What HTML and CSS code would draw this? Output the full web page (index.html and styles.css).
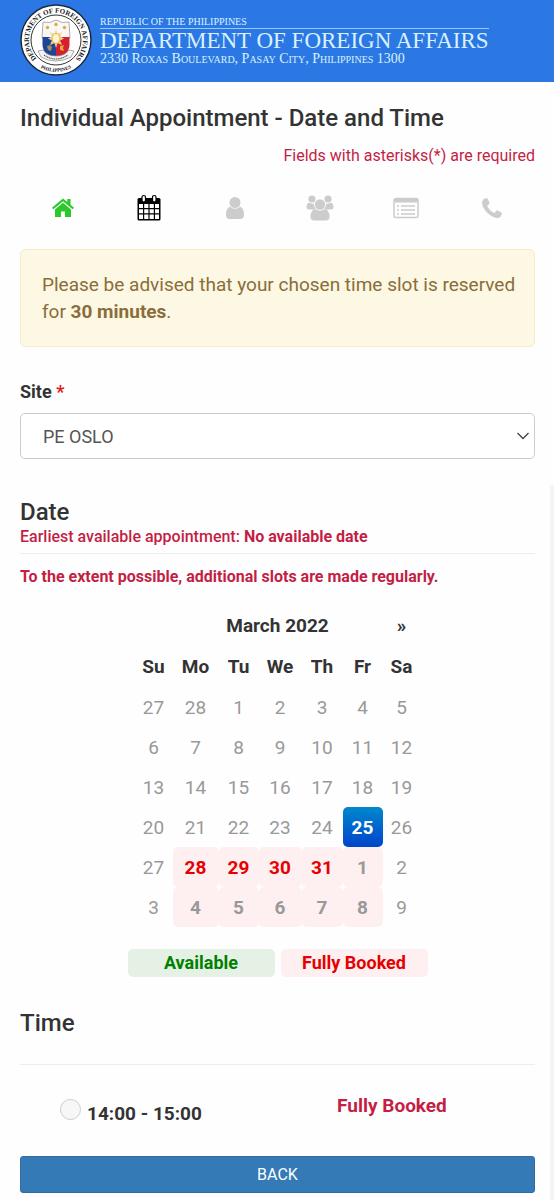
FILE: index.html
```html
<!DOCTYPE html>
<html lang="en">
<head>
  <meta charset="UTF-8" />
  <meta name="viewport" content="width=device-width, initial-scale=1.0" />
  <title>Individual Appointment - Date and Time</title>
  <link rel="stylesheet" href="styles.css">
</head>
<body>
  <header class="site-header">
    <svg class="seal" viewBox="0 0 72 72" role="img" aria-label="Department of Foreign Affairs seal">
      <defs>
        <path id="ring-top" d="M15.5 53.5 A27 27 0 1 1 56.5 53.5" />
        <path id="ring-bottom" d="M15 60 A32 32 0 0 0 57 60" />
      </defs>
      <circle cx="36" cy="36" r="35" fill="#fff" stroke="#1d2a44" stroke-width="1.5" />
      <circle cx="36" cy="36" r="25" fill="#fff" stroke="#333" stroke-width="1" />
      <text class="seal-text"><textPath href="#ring-top" startOffset="50%">DEPARTMENT OF FOREIGN AFFAIRS</textPath></text>
      <text class="seal-text small"><textPath href="#ring-bottom" startOffset="50%">PHILIPPINES</textPath></text>
      <path d="M23 18 Q30 20 36 16 Q42 20 49 18 L50 34 H22 Z" fill="#f7f7f7" stroke="#999" stroke-width=".8" />
      <path d="M22.500 33 H36 V54 Q23 51 22.500 41 Z" fill="#1f4596" />
      <path d="M36 33 H49.500 V41 Q49 51 36 54 Z" fill="#d5202f" />
      <path d="M36 25 L37.500 30 L42 28 L40 32.500 L44 34.500 L40 36.500 L42 41 L37.500 39 L36 44 L34.500 39 L30 41 L32 36.500 L28 34.500 L32 32.500 L30 28 L34.500 30 Z" fill="#f5d78a" />
      <ellipse cx="36" cy="34.500" rx="4" ry="5" fill="#fff3cf" stroke="#e0b04a" />
      <g fill="#e2a93c">
        <circle cx="36" cy="20.500" r="1.700" />
        <circle cx="27.500" cy="23.500" r="1.700" />
        <circle cx="44.500" cy="23.500" r="1.700" />
        <path d="M27 42 l3 -1 2 2 -1 4 -3 -1 Z" fill="#a58a5c" />
        <path d="M40 42 l4 -1 -1 3 1 3 -4 -1 Z" />
      </g>
      <path d="M18 47 L23 46 Q27 52 36 52 Q45 52 49 46 L54 47 L51 53 Q44 57 36 57 Q28 57 21 53 Z" fill="#f4f4f4" stroke="#888" stroke-width=".7" />
      <path d="M24 51 Q30 55 36 55 Q42 55 48 51" fill="none" stroke="#555" stroke-width="1.200" stroke-dasharray="1.200 .6" />
    </svg>
    <div class="header-text">
      <p class="republic">Republic of the Philippines</p>
      <p class="department">Department of Foreign Affairs</p>
      <p class="address">2330 Roxas Boulevard, Pasay City, Philippines 1300</p>
    </div>
  </header>

  <main>
    <section class="intro">
      <h1>Individual Appointment - Date and Time</h1>
      <p class="required-note">Fields with asterisks(*) are required</p>

      <ol class="steps">
        <li class="done" aria-label="Site">
          <svg width="24" height="22" viewBox="0 0 24 22" fill="currentColor">
            <path d="M12 1.500 L1 10.800 L2.400 12.200 L12 4.200 L21.600 12.200 L23 10.800 L19.500 7.800 V2 H16.300 V5.100 Z" />
            <path d="M12 5.800 L4 12.400 V20 H10 V14.500 H14 V20 H20 V12.400 Z" />
          </svg>
        </li>
        <li class="current" aria-label="Date and time">
          <svg width="26" height="28" viewBox="0 0 26 28">
            <path d="M3 4 H23 Q24.500 4 24.500 5.500 V25 Q24.500 26.500 23 26.500 H3 Q1.500 26.500 1.500 25 V5.500 Q1.500 4 3 4 Z" fill="currentColor" />
            <g fill="#fff">
              <path d="M3 10h4v4H3zM8.200 10h4.200v4H8.200zM13.600 10h4.200v4h-4.200zM19 10h4v4h-4z" />
              <path d="M3 15.200h4v4H3zM8.200 15.200h4.200v4H8.200zM13.600 15.200h4.200v4h-4.200zM19 15.200h4v4h-4z" />
              <path d="M3 20.400h4V25H3zM8.200 20.400h4.200V25H8.200zM13.600 20.400h4.200V25h-4.200zM19 20.400h4V25h-4z" />
            </g>
            <rect x="6" y="1.500" width="3.500" height="6.500" rx="1.700" fill="#fff" stroke="currentColor" stroke-width="1.200" />
            <rect x="16.500" y="1.500" width="3.500" height="6.500" rx="1.700" fill="#fff" stroke="currentColor" stroke-width="1.200" />
          </svg>
        </li>
        <li aria-label="Personal information">
          <svg width="20" height="24" viewBox="0 0 20 24" fill="currentColor">
            <circle cx="10" cy="6.500" r="5.500" />
            <path d="M5 10.500 Q1 12.500 1 18.500 Q1 23 4.500 23 H15.500 Q19 23 19 18.500 Q19 12.500 15 10.500 Q13 12.800 10 12.800 Q7 12.800 5 10.500 Z" />
          </svg>
        </li>
        <li aria-label="Applicants">
          <svg width="28" height="26" viewBox="0 0 28 26" fill="currentColor">
            <circle cx="6" cy="4" r="3.600" />
            <circle cx="22" cy="4" r="3.600" />
            <circle cx="14" cy="9.500" r="5.200" />
            <path d="M3 7.500 Q.5 8.500 .5 12 Q.5 14.500 3 14.500 H7.500 Q9 14 9.500 13.500 Q7.500 11.500 7.800 8.500 Q5 9 3 7.500 Z" />
            <path d="M25 7.500 Q27.500 8.500 27.500 12 Q27.500 14.500 25 14.500 H20.500 Q19 14 18.500 13.500 Q20.500 11.500 20.200 8.500 Q23 9 25 7.500 Z" />
            <path d="M9.500 14 Q4.500 15 4.500 21.500 Q4.500 25.500 8 25.500 H20 Q23.500 25.500 23.500 21.500 Q23.500 15 18.500 14 Q14 17.500 9.500 14 Z" />
          </svg>
        </li>
        <li aria-label="Summary">
          <svg width="26" height="22" viewBox="0 0 26 22" fill="none" stroke="currentColor">
            <rect x="1" y="1.500" width="24" height="19" rx="2" stroke-width="1.500" />
            <path d="M1.500 3.500 H24.500" stroke-width="4" />
            <path d="M4 9 H6 M4 13 H6 M4 17 H6 M8 9 H22 M8 13 H22 M8 17 H22" stroke-width="1.600" />
          </svg>
        </li>
        <li aria-label="Contact details">
          <svg width="22" height="22" viewBox="0 0 22 22" fill="currentColor">
            <path d="M5.500 1 L2.500 2.300 Q1 3.800 1 6 Q1.500 11 6.500 16 Q11.500 20.700 16 21 Q18.500 21 19.800 19.500 L21 16.500 Q21 15.800 20.300 15.400 L16.500 13.400 Q15.800 13.200 15.200 14 L13.600 15.800 Q13 16.200 12.200 15.600 Q8.500 13.500 6.400 9.800 Q6 9 6.500 8.500 L8 7 Q8.800 6.400 8.500 5.700 L6.600 1.700 Q6.200 .9 5.500 1 Z" />
          </svg>
        </li>
      </ol>

      <div class="alert">
        Please be advised that your chosen time slot is reserved for <strong>30 minutes</strong>.
      </div>

      <label class="field-label" for="site">Site <span class="asterisk">*</span></label>
      <div class="select-wrap">
        <select id="site">
          <option>PE OSLO</option>
        </select>
        <svg class="chevron" width="14" height="8" viewBox="0 0 14 8" fill="none" stroke="#444" stroke-width="1.300">
          <path d="M1.500 1 L7 6.500 L12.500 1" />
        </svg>
      </div>
    </section>

    <section class="schedule">
      <h2>Date</h2>
      <p class="earliest">Earliest available appointment: <strong>No available date</strong></p>
      <hr>
      <p class="slots-note">To the extent possible, additional slots are made regularly.</p>

      <div class="calendar-wrap">
        <table class="calendar">
          <colgroup>
            <col class="col-side"><col class="col-mo"><col class="col-tu"><col class="col-we"><col class="col-th"><col class="col-fr"><col class="col-side">
          </colgroup>
          <thead>
            <tr><td></td><th colspan="5">March 2022</th><th><button type="button" class="next" aria-label="Next month">»</button></th></tr>
            <tr><th>Su</th><th>Mo</th><th>Tu</th><th>We</th><th>Th</th><th>Fr</th><th>Sa</th></tr>
          </thead>
          <tbody>
            <tr><td>27</td><td>28</td><td>1</td><td>2</td><td>3</td><td>4</td><td>5</td></tr>
            <tr><td>6</td><td>7</td><td>8</td><td>9</td><td>10</td><td>11</td><td>12</td></tr>
            <tr><td>13</td><td>14</td><td>15</td><td>16</td><td>17</td><td>18</td><td>19</td></tr>
            <tr><td>20</td><td>21</td><td>22</td><td>23</td><td>24</td><td class="active">25</td><td>26</td></tr>
            <tr><td>27</td><td class="booked">28</td><td class="booked">29</td><td class="booked">30</td><td class="booked">31</td><td class="booked other">1</td><td>2</td></tr>
            <tr><td>3</td><td class="booked other">4</td><td class="booked other">5</td><td class="booked other">6</td><td class="booked other">7</td><td class="booked other">8</td><td>9</td></tr>
          </tbody>
        </table>
        <div class="legend">
          <span class="legend-available">Available</span>
          <span class="legend-booked">Fully Booked</span>
        </div>
      </div>

      <h2 class="time-title">Time</h2>
      <hr class="time-line">
      <div class="slot">
        <label class="slot-label" for="slot-1400">
          <input type="radio" id="slot-1400" name="slot">
          <span>14:00 - 15:00</span>
        </label>
        <span class="slot-status">Fully Booked</span>
      </div>
      <button type="button" class="btn-back">BACK</button>
    </section>
  </main>
</body>
</html>
```
FILE: styles.css
```css
:root {
  --header-blue: #2b78e4;
  --text-color: #333333;
  --crimson: #c41e45;
  --booked-bg: #feeff1;
  --line-color: #eeeeee;
}

* {
  box-sizing: border-box;
  margin: 0;
  padding: 0;
}

body {
  font-family: Roboto, "Liberation Sans", sans-serif;
  font-size: 19px;
  color: var(--text-color);
  background-color: #fefefe;
}

/* Header */
.site-header {
  display: flex;
  align-items: flex-start;
  gap: 8px;
  height: 82px;
  padding: 4px 20px 0;
  background-color: var(--header-blue);
}

.seal {
  width: 72px;
  height: 72px;
  flex: none;
}

.seal-text {
  font-family: "Liberation Serif", serif;
  font-size: 7px;
  font-weight: bold;
  text-anchor: middle;
  fill: #222;
}

.seal-text.small {
  font-size: 5px;
}

.header-text {
  padding-top: 11px;
  font-family: "Liberation Serif", serif;
  color: #d9f1ff;
  white-space: nowrap;
}

.republic {
  font-size: 10px;
  line-height: 13px;
  text-transform: uppercase;
}

.department {
  border-top: 1px solid #9cc8fa;
  font-size: 23px;
  line-height: 23px;
  text-transform: uppercase;
}

.address {
  font-size: 14px;
  line-height: 13px;
  font-variant: small-caps;
}

/* Intro */
.intro {
  padding: 21px 19px 0 20px;
}

h1,
h2 {
  font-size: 24px;
  font-weight: 500;
  line-height: 30px;
}

.required-note {
  margin-top: 12px;
  font-size: 16px;
  line-height: 22px;
  text-align: right;
  color: var(--crimson);
}

.steps {
  display: grid;
  grid-template-columns: repeat(6, 1fr);
  margin-top: 23px;
  list-style: none;
  color: #cccccc;
}

.steps li {
  display: flex;
  align-items: center;
  justify-content: center;
  height: 36px;
}

.steps .done {
  color: #2ac82a;
}

.steps .current {
  color: #000;
}

.alert {
  margin-top: 23px;
  padding: 21px 10px 21px 21px;
  border: 1px solid #faebcc;
  border-radius: 5px;
  background-color: #fcf8e3;
  color: #8a6d3b;
  line-height: 27px;
}

.field-label {
  display: block;
  margin-top: 32px;
  font-size: 18px;
  font-weight: 700;
  line-height: 26px;
}

.asterisk {
  color: #e02020;
}

.select-wrap {
  position: relative;
  margin-top: 8px;
}

select {
  display: block;
  width: 100%;
  height: 46px;
  padding: 0 22px;
  appearance: none;
  border: 1px solid #cccccc;
  border-radius: 5px;
  background-color: #fff;
  color: #555;
  font-family: inherit;
  font-size: 18px;
}

/* arrow lies over the select */
.chevron {
  position: absolute;
  top: 19px;
  right: 5px;
  pointer-events: none;
}

/* Date and time */
.schedule {
  margin-top: 26px;
  padding: 12px 15px 7px 20px;
  border-right: 4px solid #f4f4f4;
}

hr {
  margin-top: 6px;
  border: 0;
  border-top: 1px solid var(--line-color);
}

.earliest,
.slots-note {
  font-size: 16px;
  font-weight: 500;
  line-height: 20px;
  color: var(--crimson);
}

.slots-note {
  margin-top: 13px;
  font-weight: 700;
}

.calendar-wrap {
  width: 300px;
  max-width: 100%;
  margin: 18px auto 0;
}

.calendar {
  width: 286px;
  margin-left: 7px;
  table-layout: fixed;
  border-collapse: separate;
  border-spacing: 0;
  text-align: center;
}

.col-side {
  width: 38px;
}

.col-mo {
  width: 46px;
}

.col-tu,
.col-fr {
  width: 40px;
}

.col-we {
  width: 43px;
}

.col-th {
  width: 41px;
}

.calendar th,
.calendar td {
  height: 40px;
  border-radius: 5px;
}

.calendar th {
  height: 41px;
  font-weight: 700;
}

.calendar td {
  color: #999;
}

.next {
  border: 0;
  background: none;
  color: inherit;
  font: inherit;
}

.calendar .booked {
  background-color: var(--booked-bg);
  color: #e60000;
  font-weight: 700;
}

.calendar .other {
  color: #999;
}

.calendar .active {
  background-image: linear-gradient(#0088cc, #0044cc);
  color: #fff;
  font-weight: 700;
}

.legend {
  display: grid;
  grid-template-columns: 1fr 1fr;
  gap: 6px;
  margin-top: 22px;
  font-size: 18px;
  font-weight: 700;
  line-height: 28px;
  text-align: center;
}

.legend span {
  border-radius: 5px;
}

.legend-available {
  background-color: #e5f1e5;
  color: #008000;
}

.legend-booked {
  background-color: var(--booked-bg);
  color: #e60000;
}

.time-title {
  margin-top: 31px;
}

.time-line {
  margin-top: 26px;
}

.slot {
  display: grid;
  grid-template-columns: 7fr 5fr;
  align-items: start;
  height: 91px;
  padding: 29px 0 0 40px;
  font-weight: 700;
  line-height: 24px;
}

.slot-label {
  display: flex;
  align-items: baseline;
  gap: 6px;
  padding-top: 5px;
}

.slot-label input {
  width: 21px;
  height: 21px;
  appearance: none;
  border: 1px solid #ccc;
  border-radius: 50%;
  background-color: #f7f7f7;
}

.slot-status {
  color: var(--crimson);
}

.btn-back {
  display: block;
  width: 100%;
  height: 37px;
  border: 1px solid #2e6da4;
  border-radius: 3px;
  background-color: #337ab7;
  color: #fff;
  font-family: inherit;
  font-size: 16px;
}
```
